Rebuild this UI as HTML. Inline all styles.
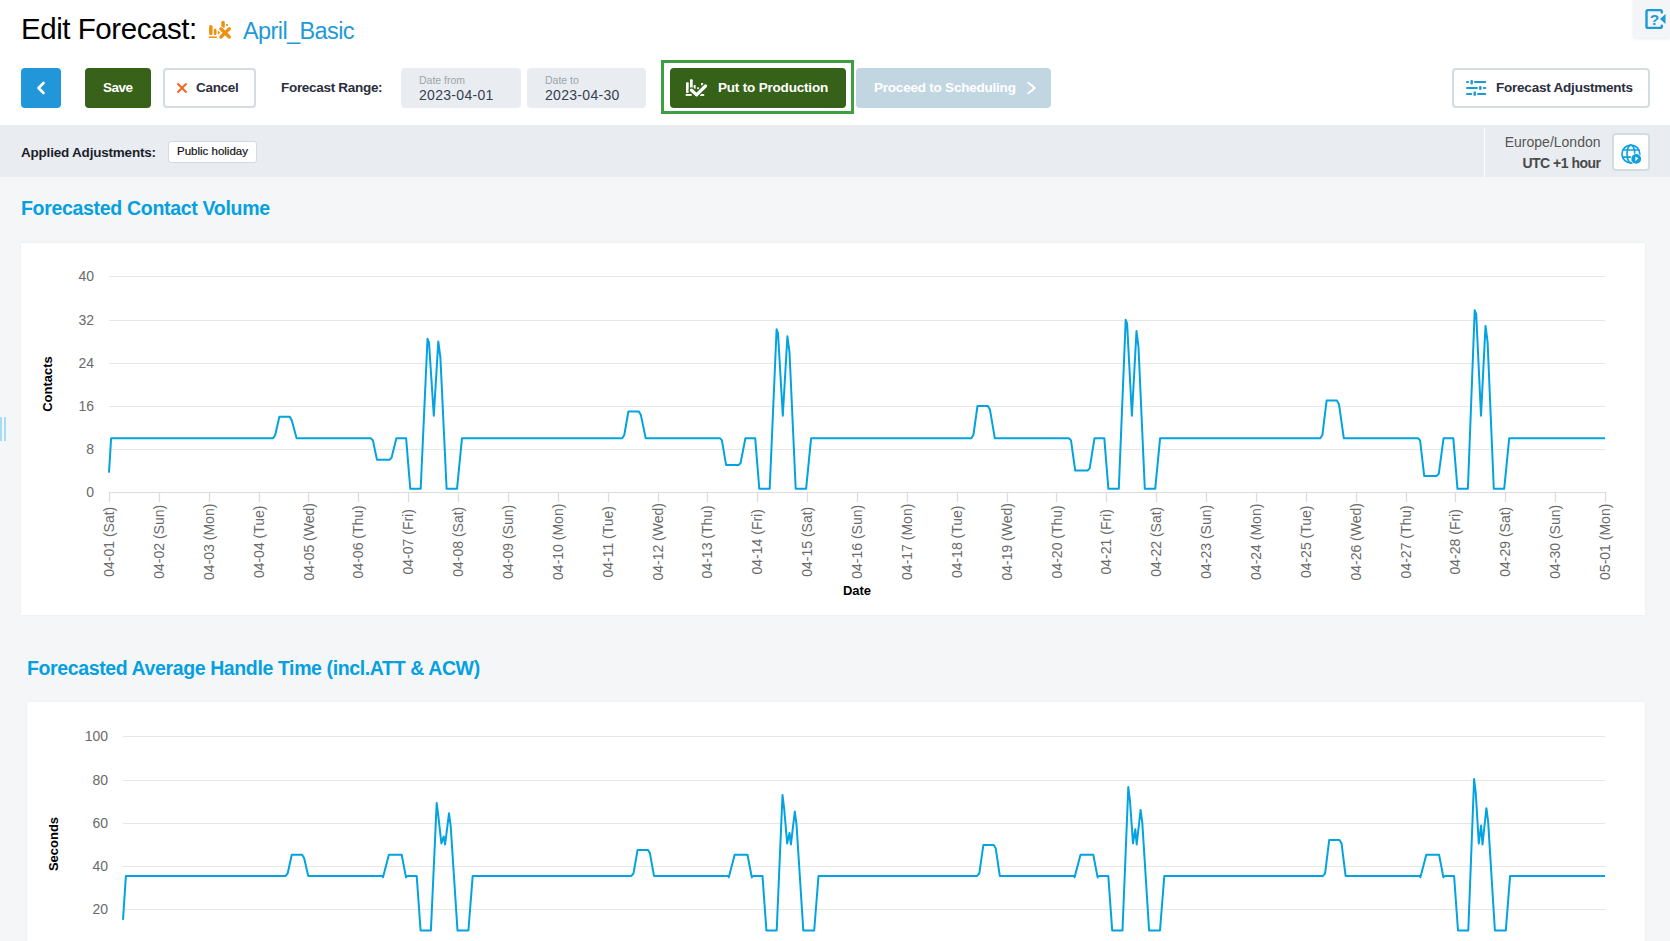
<!DOCTYPE html>
<html><head><meta charset="utf-8">
<style>
*{box-sizing:border-box;margin:0;padding:0}
html,body{width:1670px;height:941px;overflow:hidden;background:#f5f6f8;font-family:"Liberation Sans",sans-serif}
.abs{position:absolute}
.hdr{position:absolute;left:0;top:0;width:1670px;height:125px;background:#fff}
.bar{position:absolute;left:0;top:125px;width:1670px;height:52px;background:#e9edf1}
.t{position:absolute;white-space:nowrap;line-height:1}
.btn{position:absolute;border-radius:4px}
.card{position:absolute;background:#fff}
svg text{font-family:"Liberation Sans",sans-serif}
.yl{font-size:14px;fill:#6a6a6a}
.xl{font-size:14px;fill:#6a6a6a}
.yt{font-size:13px;font-weight:bold;fill:#000}
</style></head>
<body>
<div class="hdr"></div>
<!-- help panel -->
<div class="abs" style="left:1633px;top:0;width:37px;height:38px;background:#f4f5f7;box-shadow:0 1px 3px rgba(0,0,0,0.08)"></div>
<svg class="abs" style="left:1644px;top:8px" width="24" height="23" viewBox="0 0 24 23">
  <path d="M17.8 4.4 V3.6 Q17.8 2.1 16.3 2.1 H4 Q2.5 2.1 2.5 3.6 V18.4 Q2.5 19.9 4 19.9 H16.3 Q17.8 19.9 17.8 18.4 V17.6" fill="none" stroke="#1b9ad7" stroke-width="2.4" stroke-linecap="round"/>
  <path d="M21.5 6 L16 11 L21.5 16 Z" fill="#1b9ad7"/>
  <text x="5.8" y="16.6" font-size="15.5" font-weight="bold" fill="#1b9ad7" font-family="Liberation Sans">?</text>
</svg>

<!-- title -->
<div class="t" style="left:21px;top:14px;font-size:29.5px;color:#000;letter-spacing:-0.45px">Edit Forecast:</div>
<svg class="abs" style="left:204px;top:16px" width="32" height="28" viewBox="0 0 32 28">
  <g fill="#f0900f">
    <rect x="5.1" y="8.9" width="3.5" height="10.1" rx="1.6"/>
    <rect x="9.8" y="12.8" width="2.7" height="6.2" rx="1.2"/>
    <path d="M13.8 14.3 L16.2 16.5 L13.8 18.8 Z"/>
    <rect x="4.9" y="20.5" width="8" height="1.5"/>
    <rect x="17.3" y="4.8" width="3.5" height="7.5" rx="1.7"/>
    <circle cx="23" cy="9.1" r="1.1"/>
  </g>
  <path d="M16.9 12.8 L25.3 21 M25.3 12.8 L16.9 21" stroke="#fff" stroke-width="5" stroke-linecap="round"/><path d="M16.9 12.8 L25.3 21 M25.3 12.8 L16.9 21" stroke="#f0900f" stroke-width="3.3" stroke-linecap="round"/>
</svg>
<div class="t" style="left:243px;top:20px;font-size:23.5px;color:#1f9ad6;letter-spacing:-0.6px">April_Basic</div>

<!-- toolbar -->
<div class="btn" style="left:21px;top:68px;width:40px;height:40px;background:#2196d9"></div>
<svg class="abs" style="left:35px;top:81px" width="12" height="14" viewBox="0 0 12 14"><path d="M8.5 2 L3.5 7 L8.5 12" fill="none" stroke="#fff" stroke-width="2.6" stroke-linecap="round" stroke-linejoin="round"/></svg>

<div class="btn" style="left:85px;top:68px;width:66px;height:40px;background:#386119"></div>
<div class="t" style="left:103px;top:81.3px;font-size:13.5px;font-weight:bold;color:#fff;letter-spacing:-0.5px">Save</div>

<div class="btn" style="left:163px;top:68px;width:93px;height:40px;background:#fff;border:2px solid #d3dce3"></div>
<svg class="abs" style="left:176px;top:82px" width="12" height="12" viewBox="0 0 12 12"><path d="M1.5 1.5 L10.5 10.5 M10.5 1.5 L1.5 10.5" stroke="#f26522" stroke-width="2"/></svg>
<div class="t" style="left:196px;top:81.3px;font-size:13.5px;font-weight:bold;color:#2b2e3d;letter-spacing:-0.3px">Cancel</div>

<div class="t" style="left:281px;top:81.3px;font-size:13.5px;font-weight:bold;color:#2b2e3d;letter-spacing:-0.3px">Forecast Range:</div>

<div class="btn" style="left:401px;top:68px;width:120px;height:40px;background:#e9edf1"></div>
<div class="t" style="left:419px;top:75px;font-size:10.5px;color:#9ba4ad">Date from</div>
<div class="t" style="left:419px;top:88px;font-size:14px;color:#36404f;letter-spacing:0.3px">2023-04-01</div>
<div class="btn" style="left:527px;top:68px;width:119px;height:40px;background:#e9edf1"></div>
<div class="t" style="left:545px;top:75px;font-size:10.5px;color:#9ba4ad">Date to</div>
<div class="t" style="left:545px;top:88px;font-size:14px;color:#36404f;letter-spacing:0.3px">2023-04-30</div>

<div class="abs" style="left:661px;top:60px;width:193px;height:54px;border:3px solid #3e9e42"></div>
<div class="btn" style="left:670px;top:68px;width:176px;height:40px;background:#356118"></div>
<svg class="abs" style="left:680px;top:72px" width="32" height="30" viewBox="0 0 32 30">
  <g fill="#fff">
    <rect x="6" y="10.2" width="2.7" height="10.8" rx="1"/>
    <rect x="10" y="7.3" width="2.7" height="9.3" rx="1"/>
    <rect x="13.7" y="13" width="1.9" height="3.6"/>
    <rect x="17.2" y="15.3" width="1.9" height="1.9"/>
    <rect x="21" y="11.1" width="2.2" height="2.3"/>
    <rect x="5.7" y="22" width="6" height="1.9"/>
    <rect x="20" y="22" width="4.2" height="1.9"/>
  </g>
  <path d="M11.5 18.2 L16.6 22.9 L25.5 14" fill="none" stroke="#356118" stroke-width="5.5" stroke-linecap="round" stroke-linejoin="round"/>
  <path d="M11.5 18.2 L16.6 22.9 L25.5 14" fill="none" stroke="#fff" stroke-width="3.2" stroke-linecap="round" stroke-linejoin="round"/>
</svg>
<div class="t" style="left:718px;top:81.3px;font-size:13.5px;font-weight:bold;color:#fff;letter-spacing:-0.19px">Put to Production</div>

<div class="btn" style="left:856px;top:68px;width:195px;height:40px;background:#c2d6e2"></div>
<div class="t" style="left:874px;top:81.3px;font-size:13.5px;font-weight:bold;color:#fff;letter-spacing:-0.22px">Proceed to Scheduling</div>
<svg class="abs" style="left:1026px;top:81px" width="12" height="14" viewBox="0 0 12 14"><path d="M2.5 1.8 L8.8 7 L2.5 12.2" fill="none" stroke="#fff" stroke-width="2.2" stroke-linecap="round" stroke-linejoin="round"/></svg>

<div class="btn" style="left:1452px;top:68px;width:198px;height:40px;background:#fff;border:2px solid #d3dce3"></div>
<svg class="abs" style="left:1466px;top:80px" width="21" height="16" viewBox="0 0 21 16">
  <g stroke="#1b9ad7" stroke-width="2" stroke-linecap="round">
    <path d="M1 2 H2 M9 2 H19.2"/>
    <path d="M1 8 H10.9 M17.8 8 H19.2"/>
    <path d="M1 14 H5.2 M12 14 H19.2"/>
  </g>
  <g fill="#1b9ad7">
    <rect x="4.5" y="0.1" width="2.4" height="4.3" rx="0.9"/>
    <rect x="13.1" y="6" width="2.4" height="3.9" rx="0.9"/>
    <rect x="7.5" y="11.6" width="2.4" height="4.2" rx="0.9"/>
  </g>
</svg>
<div class="t" style="left:1496px;top:81.3px;font-size:13.5px;font-weight:bold;color:#2b2e3d;letter-spacing:-0.22px">Forecast Adjustments</div>

<!-- gray bar -->
<div class="bar"></div>
<div class="t" style="left:21px;top:146px;font-size:13.5px;font-weight:bold;color:#1c1f2a;letter-spacing:-0.21px">Applied Adjustments:</div>
<div class="btn" style="left:168px;top:141px;width:89px;height:22px;background:#fff;border:1px solid #d3dae1;border-radius:3px"></div>
<div class="t" style="left:177px;top:146px;font-size:11.5px;color:#111;-webkit-text-stroke:0.2px #111">Public holiday</div>
<div class="abs" style="left:1484px;top:128px;width:1px;height:49px;background:#fff"></div>
<div class="t" style="right:69.5px;top:135px;font-size:14px;color:#555">Europe/London</div>
<div class="t" style="right:69.5px;top:156px;font-size:14px;font-weight:bold;color:#4a4a4a;letter-spacing:-0.5px">UTC +1 hour</div>
<div class="btn" style="left:1612px;top:133px;width:38px;height:38px;background:#fff;border:2px solid #d3dce3"></div>
<svg class="abs" style="left:1620px;top:143px" width="24" height="24" viewBox="0 0 24 24">
  <g fill="none" stroke="#0fa0dd" stroke-width="1.7">
    <circle cx="10.9" cy="11" r="8.9"/>
    <ellipse cx="10.9" cy="11" rx="3.9" ry="8.9"/>
    <path d="M2.5 7 H19.3 M2.5 14.1 H12"/>
  </g>
  <circle cx="16.2" cy="15.9" r="5.6" fill="#fff"/>
  <circle cx="16.2" cy="15.9" r="4.9" fill="#0fa0dd"/>
  <path d="M15.3 13.5 L18.3 15.2 L15.3 18.6 Z" fill="#fff" opacity="0.9"/>
</svg>

<!-- left handle -->
<div class="abs" style="left:0;top:417px;width:2px;height:24px;background:#a8dcf4"></div>
<div class="abs" style="left:4px;top:417px;width:2px;height:24px;background:#a8dcf4"></div>

<!-- section 1 -->
<div class="t" style="left:21px;top:199px;font-size:19.5px;font-weight:bold;color:#05a0e0;letter-spacing:-0.31px">Forecasted Contact Volume</div>
<div class="card" style="left:21px;top:243px;width:1624px;height:372px;box-shadow:0 0 3px rgba(0,0,0,0.05)"></div>

<!-- section 2 -->
<div class="t" style="left:27px;top:659px;font-size:19.5px;font-weight:bold;color:#05a0e0;letter-spacing:-0.38px">Forecasted Average Handle Time (incl.ATT &amp; ACW)</div>
<div class="card" style="left:27px;top:702px;width:1618px;height:260px;box-shadow:0 0 3px rgba(0,0,0,0.05)"></div>

<svg class="abs" style="left:0;top:0" width="1670" height="941" viewBox="0 0 1670 941">
<line x1="109" y1="276.5" x2="1605" y2="276.5" stroke="#e6e6e6" stroke-width="1"/>
<line x1="109" y1="320.5" x2="1605" y2="320.5" stroke="#e6e6e6" stroke-width="1"/>
<line x1="109" y1="363.5" x2="1605" y2="363.5" stroke="#e6e6e6" stroke-width="1"/>
<line x1="109" y1="406.5" x2="1605" y2="406.5" stroke="#e6e6e6" stroke-width="1"/>
<line x1="109" y1="449.5" x2="1605" y2="449.5" stroke="#e6e6e6" stroke-width="1"/>
<line x1="109" y1="492.5" x2="1605" y2="492.5" stroke="#dcdcdc" stroke-width="1"/>
<line x1="109.5" y1="492" x2="109.5" y2="502" stroke="#dcdcdc" stroke-width="1.3"/>
<line x1="159.5" y1="492" x2="159.5" y2="502" stroke="#dcdcdc" stroke-width="1.3"/>
<line x1="209.5" y1="492" x2="209.5" y2="502" stroke="#dcdcdc" stroke-width="1.3"/>
<line x1="259.5" y1="492" x2="259.5" y2="502" stroke="#dcdcdc" stroke-width="1.3"/>
<line x1="308.5" y1="492" x2="308.5" y2="502" stroke="#dcdcdc" stroke-width="1.3"/>
<line x1="358.5" y1="492" x2="358.5" y2="502" stroke="#dcdcdc" stroke-width="1.3"/>
<line x1="408.5" y1="492" x2="408.5" y2="502" stroke="#dcdcdc" stroke-width="1.3"/>
<line x1="458.5" y1="492" x2="458.5" y2="502" stroke="#dcdcdc" stroke-width="1.3"/>
<line x1="508.5" y1="492" x2="508.5" y2="502" stroke="#dcdcdc" stroke-width="1.3"/>
<line x1="558.5" y1="492" x2="558.5" y2="502" stroke="#dcdcdc" stroke-width="1.3"/>
<line x1="608.5" y1="492" x2="608.5" y2="502" stroke="#dcdcdc" stroke-width="1.3"/>
<line x1="658.5" y1="492" x2="658.5" y2="502" stroke="#dcdcdc" stroke-width="1.3"/>
<line x1="707.5" y1="492" x2="707.5" y2="502" stroke="#dcdcdc" stroke-width="1.3"/>
<line x1="757.5" y1="492" x2="757.5" y2="502" stroke="#dcdcdc" stroke-width="1.3"/>
<line x1="807.5" y1="492" x2="807.5" y2="502" stroke="#dcdcdc" stroke-width="1.3"/>
<line x1="857.5" y1="492" x2="857.5" y2="502" stroke="#dcdcdc" stroke-width="1.3"/>
<line x1="907.5" y1="492" x2="907.5" y2="502" stroke="#dcdcdc" stroke-width="1.3"/>
<line x1="957.5" y1="492" x2="957.5" y2="502" stroke="#dcdcdc" stroke-width="1.3"/>
<line x1="1007.5" y1="492" x2="1007.5" y2="502" stroke="#dcdcdc" stroke-width="1.3"/>
<line x1="1056.5" y1="492" x2="1056.5" y2="502" stroke="#dcdcdc" stroke-width="1.3"/>
<line x1="1106.5" y1="492" x2="1106.5" y2="502" stroke="#dcdcdc" stroke-width="1.3"/>
<line x1="1156.5" y1="492" x2="1156.5" y2="502" stroke="#dcdcdc" stroke-width="1.3"/>
<line x1="1206.5" y1="492" x2="1206.5" y2="502" stroke="#dcdcdc" stroke-width="1.3"/>
<line x1="1256.5" y1="492" x2="1256.5" y2="502" stroke="#dcdcdc" stroke-width="1.3"/>
<line x1="1306.5" y1="492" x2="1306.5" y2="502" stroke="#dcdcdc" stroke-width="1.3"/>
<line x1="1356.5" y1="492" x2="1356.5" y2="502" stroke="#dcdcdc" stroke-width="1.3"/>
<line x1="1406.5" y1="492" x2="1406.5" y2="502" stroke="#dcdcdc" stroke-width="1.3"/>
<line x1="1455.5" y1="492" x2="1455.5" y2="502" stroke="#dcdcdc" stroke-width="1.3"/>
<line x1="1505.5" y1="492" x2="1505.5" y2="502" stroke="#dcdcdc" stroke-width="1.3"/>
<line x1="1555.5" y1="492" x2="1555.5" y2="502" stroke="#dcdcdc" stroke-width="1.3"/>
<line x1="1605.5" y1="492" x2="1605.5" y2="502" stroke="#dcdcdc" stroke-width="1.3"/>
<text x="94" y="280.7" text-anchor="end" class="yl">40</text>
<text x="94" y="324.7" text-anchor="end" class="yl">32</text>
<text x="94" y="367.7" text-anchor="end" class="yl">24</text>
<text x="94" y="410.7" text-anchor="end" class="yl">16</text>
<text x="94" y="453.7" text-anchor="end" class="yl">8</text>
<text x="94" y="496.7" text-anchor="end" class="yl">0</text>
<text transform="translate(114.0,541.8) rotate(-90)" text-anchor="middle" class="xl">04-01 (Sat)</text>
<text transform="translate(163.9,541.8) rotate(-90)" text-anchor="middle" class="xl">04-02 (Sun)</text>
<text transform="translate(213.7,541.8) rotate(-90)" text-anchor="middle" class="xl">04-03 (Mon)</text>
<text transform="translate(263.6,541.8) rotate(-90)" text-anchor="middle" class="xl">04-04 (Tue)</text>
<text transform="translate(313.5,541.8) rotate(-90)" text-anchor="middle" class="xl">04-05 (Wed)</text>
<text transform="translate(363.3,541.8) rotate(-90)" text-anchor="middle" class="xl">04-06 (Thu)</text>
<text transform="translate(413.2,541.8) rotate(-90)" text-anchor="middle" class="xl">04-07 (Fri)</text>
<text transform="translate(463.1,541.8) rotate(-90)" text-anchor="middle" class="xl">04-08 (Sat)</text>
<text transform="translate(512.9,541.8) rotate(-90)" text-anchor="middle" class="xl">04-09 (Sun)</text>
<text transform="translate(562.8,541.8) rotate(-90)" text-anchor="middle" class="xl">04-10 (Mon)</text>
<text transform="translate(612.7,541.8) rotate(-90)" text-anchor="middle" class="xl">04-11 (Tue)</text>
<text transform="translate(662.5,541.8) rotate(-90)" text-anchor="middle" class="xl">04-12 (Wed)</text>
<text transform="translate(712.4,541.8) rotate(-90)" text-anchor="middle" class="xl">04-13 (Thu)</text>
<text transform="translate(762.3,541.8) rotate(-90)" text-anchor="middle" class="xl">04-14 (Fri)</text>
<text transform="translate(812.1,541.8) rotate(-90)" text-anchor="middle" class="xl">04-15 (Sat)</text>
<text transform="translate(862.0,541.8) rotate(-90)" text-anchor="middle" class="xl">04-16 (Sun)</text>
<text transform="translate(911.9,541.8) rotate(-90)" text-anchor="middle" class="xl">04-17 (Mon)</text>
<text transform="translate(961.7,541.8) rotate(-90)" text-anchor="middle" class="xl">04-18 (Tue)</text>
<text transform="translate(1011.6,541.8) rotate(-90)" text-anchor="middle" class="xl">04-19 (Wed)</text>
<text transform="translate(1061.5,541.8) rotate(-90)" text-anchor="middle" class="xl">04-20 (Thu)</text>
<text transform="translate(1111.3,541.8) rotate(-90)" text-anchor="middle" class="xl">04-21 (Fri)</text>
<text transform="translate(1161.2,541.8) rotate(-90)" text-anchor="middle" class="xl">04-22 (Sat)</text>
<text transform="translate(1211.1,541.8) rotate(-90)" text-anchor="middle" class="xl">04-23 (Sun)</text>
<text transform="translate(1260.9,541.8) rotate(-90)" text-anchor="middle" class="xl">04-24 (Mon)</text>
<text transform="translate(1310.8,541.8) rotate(-90)" text-anchor="middle" class="xl">04-25 (Tue)</text>
<text transform="translate(1360.7,541.8) rotate(-90)" text-anchor="middle" class="xl">04-26 (Wed)</text>
<text transform="translate(1410.5,541.8) rotate(-90)" text-anchor="middle" class="xl">04-27 (Thu)</text>
<text transform="translate(1460.4,541.8) rotate(-90)" text-anchor="middle" class="xl">04-28 (Fri)</text>
<text transform="translate(1510.3,541.8) rotate(-90)" text-anchor="middle" class="xl">04-29 (Sat)</text>
<text transform="translate(1560.1,541.8) rotate(-90)" text-anchor="middle" class="xl">04-30 (Sun)</text>
<text transform="translate(1610.0,541.8) rotate(-90)" text-anchor="middle" class="xl">05-01 (Mon)</text>
<text transform="translate(52,384.0) rotate(-90)" text-anchor="middle" class="yt">Contacts</text>
<text x="857.0" y="595" text-anchor="middle" class="yt">Date</text>
<polyline points="109.0,472.6 111.1,438.2 273.1,438.2 275.2,435.0 279.4,416.8 289.8,416.8 291.8,420.5 296.6,438.2 370.8,438.2 372.9,440.4 377.0,459.8 389.5,459.8 391.6,457.6 396.4,438.2 406.1,438.2 410.3,488.8 420.7,488.8 427.5,338.8 429.0,342.6 433.8,415.7 438.3,341.5 440.4,357.6 446.6,488.8 457.0,488.8 462.0,438.2 622.2,438.2 624.3,435.0 628.4,411.4 638.8,411.4 640.9,415.1 645.7,438.2 719.9,438.2 721.9,440.4 726.1,465.1 738.6,465.1 740.6,463.0 745.4,438.2 755.2,438.2 759.3,488.8 769.7,488.8 776.6,329.3 778.0,333.1 782.8,415.7 787.4,336.3 789.5,352.4 795.7,488.8 806.1,488.8 811.1,438.2 971.3,438.2 973.4,435.0 977.5,406.0 987.9,406.0 990.0,409.8 994.8,438.2 1068.9,438.2 1071.0,440.4 1075.2,470.5 1087.6,470.5 1089.7,468.4 1094.5,438.2 1104.3,438.2 1108.4,488.8 1118.8,488.8 1125.7,319.8 1127.1,323.5 1131.9,415.7 1136.5,331.1 1138.5,347.2 1144.8,488.8 1155.2,488.8 1160.1,438.2 1320.3,438.2 1322.4,435.0 1326.6,400.6 1337.0,400.6 1339.0,404.4 1343.8,438.2 1418.0,438.2 1420.1,440.4 1424.2,475.9 1436.7,475.9 1438.8,473.7 1443.6,438.2 1453.3,438.2 1457.5,488.8 1467.9,488.8 1474.7,310.3 1476.2,314.0 1481.0,415.7 1485.5,325.9 1487.6,342.0 1493.8,488.8 1504.2,488.8 1509.2,438.2 1605.0,438.2" fill="none" stroke="#02a3e0" stroke-width="2" stroke-linejoin="round"/>
<line x1="123" y1="736.5" x2="1605" y2="736.5" stroke="#e6e6e6" stroke-width="1"/>
<line x1="123" y1="780.5" x2="1605" y2="780.5" stroke="#e6e6e6" stroke-width="1"/>
<line x1="123" y1="823.5" x2="1605" y2="823.5" stroke="#e6e6e6" stroke-width="1"/>
<line x1="123" y1="866.5" x2="1605" y2="866.5" stroke="#e6e6e6" stroke-width="1"/>
<line x1="123" y1="909.5" x2="1605" y2="909.5" stroke="#e6e6e6" stroke-width="1"/>
<line x1="123" y1="952.5" x2="1605" y2="952.5" stroke="#dcdcdc" stroke-width="1"/>
<line x1="123.5" y1="952" x2="123.5" y2="962" stroke="#dcdcdc" stroke-width="1.3"/>
<line x1="172.5" y1="952" x2="172.5" y2="962" stroke="#dcdcdc" stroke-width="1.3"/>
<line x1="222.5" y1="952" x2="222.5" y2="962" stroke="#dcdcdc" stroke-width="1.3"/>
<line x1="271.5" y1="952" x2="271.5" y2="962" stroke="#dcdcdc" stroke-width="1.3"/>
<line x1="321.5" y1="952" x2="321.5" y2="962" stroke="#dcdcdc" stroke-width="1.3"/>
<line x1="370.5" y1="952" x2="370.5" y2="962" stroke="#dcdcdc" stroke-width="1.3"/>
<line x1="419.5" y1="952" x2="419.5" y2="962" stroke="#dcdcdc" stroke-width="1.3"/>
<line x1="469.5" y1="952" x2="469.5" y2="962" stroke="#dcdcdc" stroke-width="1.3"/>
<line x1="518.5" y1="952" x2="518.5" y2="962" stroke="#dcdcdc" stroke-width="1.3"/>
<line x1="568.5" y1="952" x2="568.5" y2="962" stroke="#dcdcdc" stroke-width="1.3"/>
<line x1="617.5" y1="952" x2="617.5" y2="962" stroke="#dcdcdc" stroke-width="1.3"/>
<line x1="666.5" y1="952" x2="666.5" y2="962" stroke="#dcdcdc" stroke-width="1.3"/>
<line x1="716.5" y1="952" x2="716.5" y2="962" stroke="#dcdcdc" stroke-width="1.3"/>
<line x1="765.5" y1="952" x2="765.5" y2="962" stroke="#dcdcdc" stroke-width="1.3"/>
<line x1="815.5" y1="952" x2="815.5" y2="962" stroke="#dcdcdc" stroke-width="1.3"/>
<line x1="864.5" y1="952" x2="864.5" y2="962" stroke="#dcdcdc" stroke-width="1.3"/>
<line x1="913.5" y1="952" x2="913.5" y2="962" stroke="#dcdcdc" stroke-width="1.3"/>
<line x1="963.5" y1="952" x2="963.5" y2="962" stroke="#dcdcdc" stroke-width="1.3"/>
<line x1="1012.5" y1="952" x2="1012.5" y2="962" stroke="#dcdcdc" stroke-width="1.3"/>
<line x1="1062.5" y1="952" x2="1062.5" y2="962" stroke="#dcdcdc" stroke-width="1.3"/>
<line x1="1111.5" y1="952" x2="1111.5" y2="962" stroke="#dcdcdc" stroke-width="1.3"/>
<line x1="1160.5" y1="952" x2="1160.5" y2="962" stroke="#dcdcdc" stroke-width="1.3"/>
<line x1="1210.5" y1="952" x2="1210.5" y2="962" stroke="#dcdcdc" stroke-width="1.3"/>
<line x1="1259.5" y1="952" x2="1259.5" y2="962" stroke="#dcdcdc" stroke-width="1.3"/>
<line x1="1309.5" y1="952" x2="1309.5" y2="962" stroke="#dcdcdc" stroke-width="1.3"/>
<line x1="1358.5" y1="952" x2="1358.5" y2="962" stroke="#dcdcdc" stroke-width="1.3"/>
<line x1="1407.5" y1="952" x2="1407.5" y2="962" stroke="#dcdcdc" stroke-width="1.3"/>
<line x1="1457.5" y1="952" x2="1457.5" y2="962" stroke="#dcdcdc" stroke-width="1.3"/>
<line x1="1506.5" y1="952" x2="1506.5" y2="962" stroke="#dcdcdc" stroke-width="1.3"/>
<line x1="1556.5" y1="952" x2="1556.5" y2="962" stroke="#dcdcdc" stroke-width="1.3"/>
<line x1="1605.5" y1="952" x2="1605.5" y2="962" stroke="#dcdcdc" stroke-width="1.3"/>
<text x="108" y="740.7" text-anchor="end" class="yl">100</text>
<text x="108" y="784.7" text-anchor="end" class="yl">80</text>
<text x="108" y="827.7" text-anchor="end" class="yl">60</text>
<text x="108" y="870.7" text-anchor="end" class="yl">40</text>
<text x="108" y="913.7" text-anchor="end" class="yl">20</text>
<text x="108" y="956.7" text-anchor="end" class="yl">0</text>
<text transform="translate(128.0,1001.8) rotate(-90)" text-anchor="middle" class="xl">04-01 (Sat)</text>
<text transform="translate(177.4,1001.8) rotate(-90)" text-anchor="middle" class="xl">04-02 (Sun)</text>
<text transform="translate(226.8,1001.8) rotate(-90)" text-anchor="middle" class="xl">04-03 (Mon)</text>
<text transform="translate(276.2,1001.8) rotate(-90)" text-anchor="middle" class="xl">04-04 (Tue)</text>
<text transform="translate(325.6,1001.8) rotate(-90)" text-anchor="middle" class="xl">04-05 (Wed)</text>
<text transform="translate(375.0,1001.8) rotate(-90)" text-anchor="middle" class="xl">04-06 (Thu)</text>
<text transform="translate(424.4,1001.8) rotate(-90)" text-anchor="middle" class="xl">04-07 (Fri)</text>
<text transform="translate(473.8,1001.8) rotate(-90)" text-anchor="middle" class="xl">04-08 (Sat)</text>
<text transform="translate(523.2,1001.8) rotate(-90)" text-anchor="middle" class="xl">04-09 (Sun)</text>
<text transform="translate(572.6,1001.8) rotate(-90)" text-anchor="middle" class="xl">04-10 (Mon)</text>
<text transform="translate(622.0,1001.8) rotate(-90)" text-anchor="middle" class="xl">04-11 (Tue)</text>
<text transform="translate(671.4,1001.8) rotate(-90)" text-anchor="middle" class="xl">04-12 (Wed)</text>
<text transform="translate(720.8,1001.8) rotate(-90)" text-anchor="middle" class="xl">04-13 (Thu)</text>
<text transform="translate(770.2,1001.8) rotate(-90)" text-anchor="middle" class="xl">04-14 (Fri)</text>
<text transform="translate(819.6,1001.8) rotate(-90)" text-anchor="middle" class="xl">04-15 (Sat)</text>
<text transform="translate(869.0,1001.8) rotate(-90)" text-anchor="middle" class="xl">04-16 (Sun)</text>
<text transform="translate(918.4,1001.8) rotate(-90)" text-anchor="middle" class="xl">04-17 (Mon)</text>
<text transform="translate(967.8,1001.8) rotate(-90)" text-anchor="middle" class="xl">04-18 (Tue)</text>
<text transform="translate(1017.2,1001.8) rotate(-90)" text-anchor="middle" class="xl">04-19 (Wed)</text>
<text transform="translate(1066.6,1001.8) rotate(-90)" text-anchor="middle" class="xl">04-20 (Thu)</text>
<text transform="translate(1116.0,1001.8) rotate(-90)" text-anchor="middle" class="xl">04-21 (Fri)</text>
<text transform="translate(1165.4,1001.8) rotate(-90)" text-anchor="middle" class="xl">04-22 (Sat)</text>
<text transform="translate(1214.8,1001.8) rotate(-90)" text-anchor="middle" class="xl">04-23 (Sun)</text>
<text transform="translate(1264.2,1001.8) rotate(-90)" text-anchor="middle" class="xl">04-24 (Mon)</text>
<text transform="translate(1313.6,1001.8) rotate(-90)" text-anchor="middle" class="xl">04-25 (Tue)</text>
<text transform="translate(1363.0,1001.8) rotate(-90)" text-anchor="middle" class="xl">04-26 (Wed)</text>
<text transform="translate(1412.4,1001.8) rotate(-90)" text-anchor="middle" class="xl">04-27 (Thu)</text>
<text transform="translate(1461.8,1001.8) rotate(-90)" text-anchor="middle" class="xl">04-28 (Fri)</text>
<text transform="translate(1511.2,1001.8) rotate(-90)" text-anchor="middle" class="xl">04-29 (Sat)</text>
<text transform="translate(1560.6,1001.8) rotate(-90)" text-anchor="middle" class="xl">04-30 (Sun)</text>
<text transform="translate(1610.0,1001.8) rotate(-90)" text-anchor="middle" class="xl">05-01 (Mon)</text>
<text transform="translate(58,844.0) rotate(-90)" text-anchor="middle" class="yt">Seconds</text>
<text x="864.0" y="1055" text-anchor="middle" class="yt">Date</text>
<polyline points="123.0,919.8 125.9,875.9 285.6,875.9 287.7,873.3 291.8,854.8 302.1,854.8 304.1,858.0 308.2,875.9 382.3,875.9 383.0,877.2 388.9,854.8 401.7,854.8 406.0,877.4 407.5,875.9 416.7,875.9 420.6,930.5 430.9,930.5 436.7,803.0 438.3,815.9 441.4,843.4 443.7,836.5 445.1,844.5 449.0,813.3 450.7,826.2 457.5,930.5 468.4,930.5 472.7,875.9 631.4,875.9 633.5,873.3 637.6,849.9 647.9,849.9 649.9,853.1 654.0,875.9 728.1,875.9 728.8,877.2 734.7,854.8 747.5,854.8 751.8,877.4 753.3,875.9 762.5,875.9 766.4,930.5 776.7,930.5 782.5,795.0 784.1,808.0 787.2,843.4 789.5,832.9 790.9,844.5 794.8,811.6 796.5,824.5 803.3,930.5 814.2,930.5 818.5,875.9 977.2,875.9 979.3,873.3 983.4,844.9 993.7,844.9 995.7,848.2 999.8,875.9 1073.9,875.9 1074.6,877.2 1080.5,854.8 1093.3,854.8 1097.6,877.4 1099.1,875.9 1108.3,875.9 1112.2,930.5 1122.5,930.5 1128.3,787.1 1129.9,800.0 1133.0,843.4 1135.3,829.2 1136.7,844.5 1140.6,809.9 1142.3,822.8 1149.1,930.5 1160.0,930.5 1164.3,875.9 1323.0,875.9 1325.1,873.3 1329.2,840.0 1339.5,840.0 1341.5,843.2 1345.6,875.9 1419.7,875.9 1420.4,877.2 1426.3,854.8 1439.1,854.8 1443.4,877.4 1444.9,875.9 1454.1,875.9 1458.0,930.5 1468.3,930.5 1474.1,779.1 1475.7,792.0 1478.8,843.4 1481.1,825.6 1482.5,844.5 1486.4,808.2 1488.1,821.1 1494.9,930.5 1505.8,930.5 1510.1,875.9 1605.0,875.9" fill="none" stroke="#02a3e0" stroke-width="2" stroke-linejoin="round"/>
</svg>
</body></html>
